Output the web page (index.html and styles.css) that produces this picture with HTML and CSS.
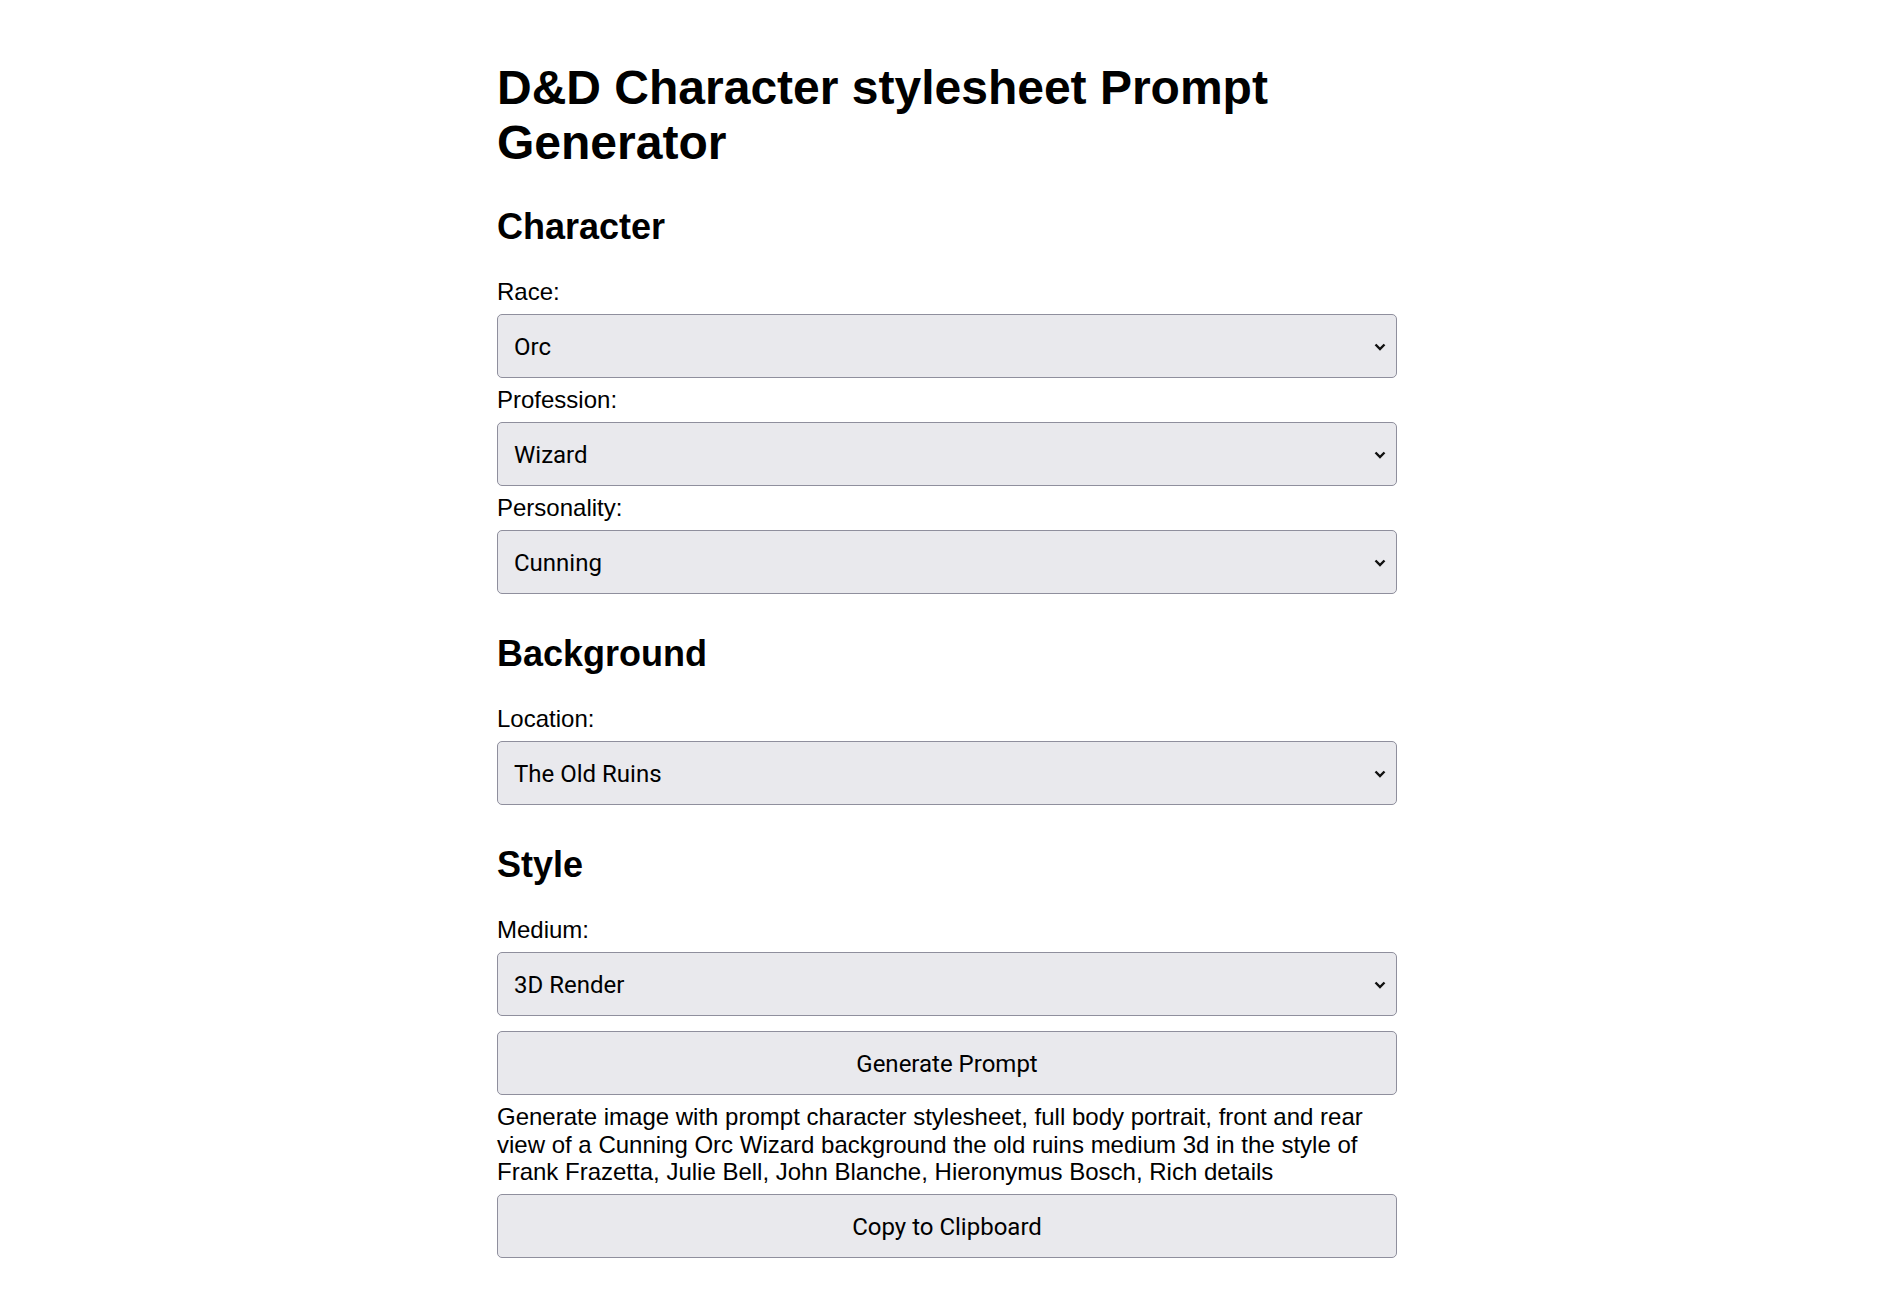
FILE: index.html
```html
<!DOCTYPE html>
<html lang="en">
<head>
<meta charset="utf-8">
<title>D&amp;D Character stylesheet Prompt Generator</title>
<link rel="stylesheet" href="styles.css">
</head>
<body>
<div class="container">
  <h1>D&amp;D Character stylesheet Prompt Generator</h1>

  <h2 class="section-title first">Character</h2>
  <label class="field-label" for="race">Race:</label>
  <div class="select-wrap">
    <select id="race" class="field-select"><option>Orc</option></select>
    <svg class="chevron" width="12" height="8" viewBox="0 0 12 8"><path d="M1.5 1.5 L6 6 L10.5 1.5" fill="none" stroke="#111" stroke-width="2.4"/></svg>
  </div>
  <label class="field-label" for="profession">Profession:</label>
  <div class="select-wrap">
    <select id="profession" class="field-select"><option>Wizard</option></select>
    <svg class="chevron" width="12" height="8" viewBox="0 0 12 8"><path d="M1.5 1.5 L6 6 L10.5 1.5" fill="none" stroke="#111" stroke-width="2.4"/></svg>
  </div>
  <label class="field-label" for="personality">Personality:</label>
  <div class="select-wrap">
    <select id="personality" class="field-select"><option>Cunning</option></select>
    <svg class="chevron" width="12" height="8" viewBox="0 0 12 8"><path d="M1.5 1.5 L6 6 L10.5 1.5" fill="none" stroke="#111" stroke-width="2.4"/></svg>
  </div>

  <h2 class="section-title">Background</h2>
  <label class="field-label" for="location">Location:</label>
  <div class="select-wrap">
    <select id="location" class="field-select"><option>The Old Ruins</option></select>
    <svg class="chevron" width="12" height="8" viewBox="0 0 12 8"><path d="M1.5 1.5 L6 6 L10.5 1.5" fill="none" stroke="#111" stroke-width="2.4"/></svg>
  </div>

  <h2 class="section-title">Style</h2>
  <label class="field-label" for="medium">Medium:</label>
  <div class="select-wrap">
    <select id="medium" class="field-select"><option>3D Render</option></select>
    <svg class="chevron" width="12" height="8" viewBox="0 0 12 8"><path d="M1.5 1.5 L6 6 L10.5 1.5" fill="none" stroke="#111" stroke-width="2.4"/></svg>
  </div>

  <button class="action-btn generate-btn" type="button">Generate Prompt</button>
  <p class="prompt-output">Generate image with prompt character stylesheet, full body portrait, front and rear view of a Cunning Orc Wizard background the old ruins medium 3d in the style of Frank Frazetta, Julie Bell, John Blanche, Hieronymus Bosch, Rich details</p>
  <button class="action-btn copy-btn" type="button">Copy to Clipboard</button>
</div>
</body>
</html>
```

FILE: styles.css
```css
html, body {
  margin: 0;
  padding: 0;
  background: #ffffff;
}

body {
  padding: 8px;
  font-family: "Liberation Sans", Arial, sans-serif;
  font-size: 24px;
  color: #000;
}

.container {
  max-width: 900px;
  margin: 0 auto;
  padding: 20px 0;
}

h1 {
  font-size: 48px;
  font-weight: bold;
  margin: 32px 0 0;
  line-height: 55px;
}

.section-title {
  font-size: 36px;
  font-weight: bold;
  margin: 39px 0 31px;
  line-height: 41px;
}

.section-title.first {
  margin-top: 36px;
}

.field-label {
  display: block;
  line-height: 28px;
  margin: 0 0 8px;
}

.select-wrap {
  position: relative;
  margin: 0 0 8px;
}

.field-select {
  display: block;
  width: 100%;
  box-sizing: border-box;
  height: 64px;
  margin: 0;
  padding: 2px 40px 0 16px;
  font-family: Roboto, "Noto Sans", sans-serif;
  font-size: 24px;
  color: #000;
  background: #e9e9ed;
  border: 1px solid #8f8f9d;
  border-radius: 5px;
  -webkit-appearance: none;
  appearance: none;
}

.chevron {
  position: absolute;
  right: 11px;
  top: 29px;
  pointer-events: none;
}

.action-btn {
  display: block;
  width: 100%;
  box-sizing: border-box;
  height: 64px;
  padding: 2px 16px 0;
  font-family: Roboto, "Noto Sans", sans-serif;
  font-size: 24px;
  color: #000;
  background: #e9e9ed;
  border: 1px solid #8f8f9d;
  border-radius: 5px;
}

.generate-btn {
  margin: 15px 0 8px;
}

.prompt-output {
  margin: 0 0 8px;
  line-height: 27.6px;
}

.copy-btn {
  margin: 0;
}
```
